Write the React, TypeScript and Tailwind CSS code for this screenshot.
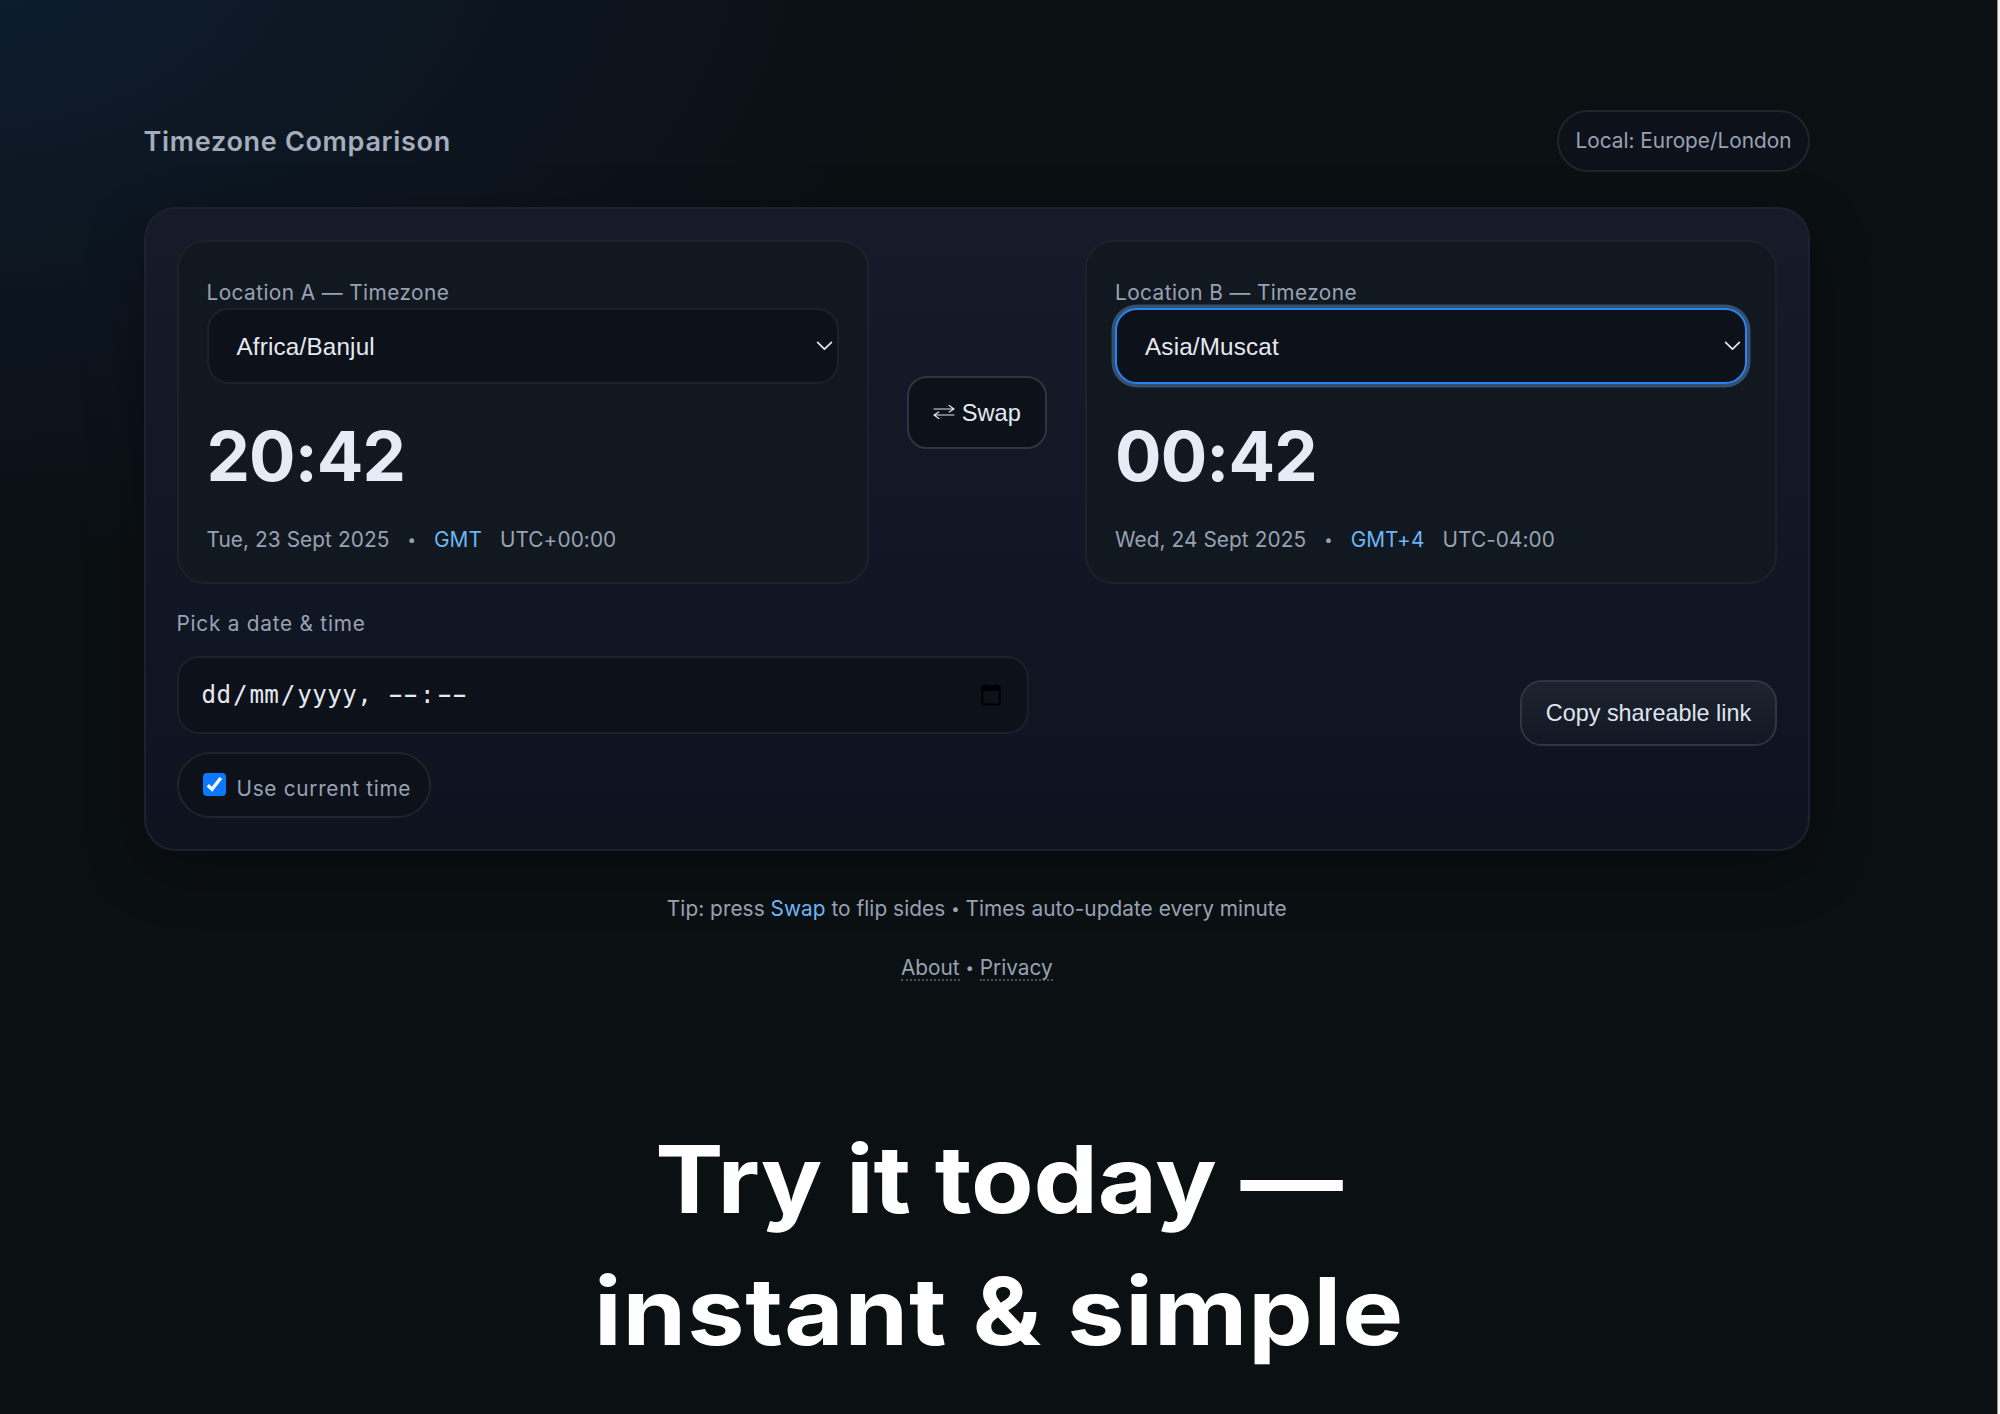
import React, { useState } from 'react';

type Zone = {
  id: string;
  zone: string;
  time: string;
  date: string;
  abbr: string;
  offset: string;
  focused?: boolean;
};

const ZONES: Zone[] = [
  { id: 'A', zone: 'Africa/Banjul', time: '20:42', date: 'Tue, 23 Sept 2025', abbr: 'GMT', offset: 'UTC+00:00' },
  { id: 'B', zone: 'Asia/Muscat', time: '00:42', date: 'Wed, 24 Sept 2025', abbr: 'GMT+4', offset: 'UTC-04:00', focused: true },
];

function Chevron() {
  return (
    <svg className="w-[17px] h-[10px] shrink-0" viewBox="0 0 17 10" fill="none">
      <path d="M1.6 1.4 8.5 8.2l6.9-6.8" stroke="#e6e9f2" strokeWidth="1.7" strokeLinecap="round" strokeLinejoin="round" />
    </svg>
  );
}

function SwapArrows() {
  return (
    <svg className="w-[22px] h-[16px] shrink-0" viewBox="0 0 22 16" fill="none" stroke="#dfe4ee" strokeWidth="1.2">
      <path d="M.5 5H21M15.8 1.2 21 5l-5.2 3.2" />
      <path d="M21.5 11H1M6.2 7.8 1 11l5.2 3.8" />
    </svg>
  );
}

function CalendarIcon() {
  return (
    <svg className="w-[20px] h-[22px] shrink-0" viewBox="0 0 20 22">
      <path
        fill="#000"
        fillRule="evenodd"
        d="M4 0h2v1.5h8V0h2v1.5h1.8c1.1 0 1.9.8 1.9 1.9v16.2c0 1.1-.8 1.9-1.9 1.9H2.2c-1.1 0-1.9-.8-1.9-1.9V3.4c0-1.1.8-1.9 1.9-1.9H4V0Zm-1.8 7v12.5h15.6V7H2.2Z"
      />
    </svg>
  );
}

// One monospace cell holding a dash a bit wider than a regular hyphen
function Dash() {
  return (
    <span className="inline-flex w-[15px] justify-center font-['Inter',sans-serif] font-medium tracking-normal">
      <span className="scale-x-[1.4]">-</span>
    </span>
  );
}

function Bullet() {
  return <span className="relative -top-[2px] text-[15px]">•</span>;
}

function ZonePanel({ data }: { data: Zone }) {
  return (
    <section className="w-[692px] h-[344px] rounded-[28px] border-2 border-[#1b222b] bg-[#111820] px-[28px] pt-[36px]">
      <div className="h-[30px] text-[20.8px] leading-[30px] tracking-[0.42px] text-[#98a2b3]">
        Location {data.id} — Timezone
      </div>
      <div
        className={`flex h-[76px] items-center justify-between rounded-[22px] border-2 bg-[#0d1119] pl-[28px] pr-[4px] ${
          data.focused ? 'border-[#2b83f3] ring-[3.5px] ring-[#34506f]' : 'border-[#1c212b]'
        }`}
      >
        <span className="pt-[2px] font-['Liberation_Sans',sans-serif] text-[24.2px] leading-[28px] tracking-[0.2px] text-[#e6e9f2]">
          {data.zone}
        </span>
        <Chevron />
      </div>
      <div className="mt-[30px] h-[84px] text-[69px] font-bold leading-[84px] tracking-[-0.9px] text-[#e6ecf5]">
        {data.time}
      </div>
      <div className="mt-[27px] flex h-[30px] items-baseline text-[20.8px] leading-[30px] tracking-[0.08px] text-[#98a2b3]">
        <span>{data.date}</span>
        <span className="mx-[18px]">
          <Bullet />
        </span>
        <span className="text-[#6cb6f5]">{data.abbr}</span>
        <span className="ml-[18px]">{data.offset}</span>
      </div>
    </section>
  );
}

export default function App() {
  const [useNow, setUseNow] = useState(true);

  return (
    <div className="h-[1414px] w-[2000px] overflow-hidden border-r-2 border-[#f4f4f4] bg-[#0b1013] bg-[radial-gradient(1000px_640px_at_-60px_-70px,#0d1f33_0%,#0d1824_40%,#0c131b_75%,#0b1013_100%)] font-['Inter',sans-serif] shadow-[inset_-1px_0_0_#8f9192]">
      <div className="ml-[143.5px] w-[1666.5px] pt-[110px]">
        {/* Header */}
        <header className="flex h-[62px] items-center justify-between">
          <h1 className="pt-px text-[27px] font-semibold leading-[36px] tracking-[0.69px] text-[#a3adbd]">
            Timezone Comparison
          </h1>
          <div className="flex h-[62px] w-[253px] items-center justify-center rounded-full border-2 border-[#1f242d] bg-[#0d1119] text-[20.8px] leading-[30px] text-[#98a2b3]">
            Local: Europe/London
          </div>
        </header>

        {/* Main card */}
        <main className="mt-[35px] h-[644px] rounded-[32px] border-2 border-[#1c222d] bg-linear-to-b from-[#151b29] to-[#0e1320] px-[31px] pt-[31px] shadow-[0_18px_55px_rgba(0,0,0,0.35)]">
          <div className="flex items-center justify-between">
            <ZonePanel data={ZONES[0]} />
            <button className="flex h-[73px] w-[140px] items-center justify-center gap-[7px] rounded-[20px] border-2 border-[#30343c] bg-[#0d1119]">
              <SwapArrows />
              <span className="pt-[2px] font-['Liberation_Sans',sans-serif] text-[23.6px] leading-[28px] text-[#e6e9f2]">Swap</span>
            </button>
            <ZonePanel data={ZONES[1]} />
          </div>

          <div className="flex items-center justify-between">
            <div>
              <div className="mt-[25px] h-[30px] text-[20.8px] leading-[30px] tracking-[0.76px] text-[#98a2b3]">
                Pick a date &amp; time
              </div>
              <div className="mt-[17px] flex h-[78px] w-[852px] items-center justify-between rounded-[22px] border-2 border-[#1c212b] bg-[#0d1119] pl-[23px] pr-[26px]">
                <span className="whitespace-pre font-['DejaVu_Sans_Mono',monospace] text-[24.2px] leading-[30px] tracking-[0.4px] text-[#e6e9f2]">
                  <span>dd</span>
                  <span className="mx-[1.5px]">/</span>
                  <span>mm</span>
                  <span className="mx-[1.5px]">/</span>
                  <span className="mr-[1px]">yyyy, </span>
                  <Dash />
                  <Dash />
                  <span className="mx-[2px]">:</span>
                  <Dash />
                  <Dash />
                </span>
                <CalendarIcon />
              </div>
              <label className="mt-[18px] flex h-[66px] w-[254px] items-center rounded-full border-2 border-[#1f242d] bg-[#0d1119] pl-[24px]">
                <input type="checkbox" checked={useNow} onChange={() => setUseNow(!useNow)} className="sr-only" />
                <span className={`mb-[2px] flex size-[23px] items-center justify-center rounded-[4px] ${useNow ? 'bg-[#0a78ff]' : 'bg-white'}`}>
                  {useNow && (
                    <svg className="size-[17px]" viewBox="0 0 17 17" fill="none">
                      <path d="M1.8 9.2 6 13.2 14.8 2" stroke="#fff" strokeWidth="3.4" />
                    </svg>
                  )}
                </span>
                <span className="ml-[11px] mt-[8px] text-[20.8px] leading-[30px] tracking-[0.7px] text-[#98a2b3]">
                  Use current time
                </span>
              </label>
            </div>
            <button className="mt-[23px] h-[66px] w-[257px] rounded-[22px] border-2 border-[#303541] bg-linear-to-b from-[#1e2330] to-[#121723] font-['Liberation_Sans',sans-serif] text-[23.4px] leading-[28px] text-[#dfe5ee]">
              Copy shareable link
            </button>
          </div>
        </main>

        {/* Footer */}
        <footer className="mt-[42px] text-center text-[20.8px] leading-[32px] text-[#98a2b3]">
          <p className="h-[32px] tracking-[0.05px]">
            Tip: press <span className="text-[#6cb6f5]">Swap</span> to flip sides <Bullet /> Times auto-update every minute
          </p>
          <p className="mt-[27px] h-[37px]">
            <a className="inline-block h-[29px] border-b-2 border-dotted border-[#4a515c]">About</a> <Bullet />{' '}
            <a className="inline-block h-[29px] border-b-2 border-dotted border-[#4a515c]">Privacy</a>
          </p>
        </footer>
      </div>

      <h2 className="mt-[124px] scale-x-[1.1] text-center text-[93px] font-bold leading-[132px] text-white">
        <span className="tracking-[-0.2px]">Try it today —</span>
        <br />
        <span className="tracking-[0.8px]">instant &amp; simple</span>
      </h2>
    </div>
  );
}
